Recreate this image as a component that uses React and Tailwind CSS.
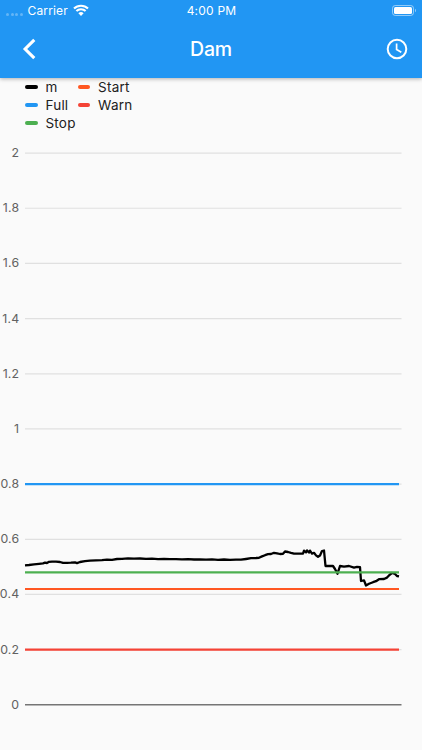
import React from 'react';

const legend = [
  [
    { label: 'm', color: 'bg-black' },
    { label: 'Full', color: 'bg-[#2196f3]' },
    { label: 'Stop', color: 'bg-[#4caf50]' },
  ],
  [
    { label: 'Start', color: 'bg-[#ff5722]' },
    { label: 'Warn', color: 'bg-[#f44336]' },
  ],
];

const ticks = ['2', '1.8', '1.6', '1.4', '1.2', '1', '0.8', '0.6', '0.4', '0.2', '0'];

const limits = [
  { name: 'Full', value: 0.8, color: '#2196f3' },
  { name: 'Stop', value: 0.48, color: '#4caf50' },
  { name: 'Start', value: 0.42, color: '#ff5722' },
  { name: 'Warn', value: 0.2, color: '#f44336' },
];

const level =
  '25,565.3 29,565 34,564.4 39,563.8 43,563.3 45,562.6 47,563 49,561.8 52,561.6 56,561.7 60,562 63,562.8 67,562.9 71,562.7 75,562.4 77,563.1 80,562 85,561.2 90,560.6 96,560.3 102,560.2 107,559.7 112,559.8 117,559 122,558.9 128,558.4 134,558.6 140,558.5 146,558.9 152,558.7 158,559.1 164,558.9 170,559.2 176,559.1 182,559.3 188,559.2 194,559.5 200,559.3 206,559.7 212,559.4 218,559.8 224,559.5 230,559.8 236,559.6 241,559.7 246,559 251,558.2 256,558 259,557.8 262,556.4 265,555.2 268,554.2 271,554 274,552.8 277,553.3 280,554 283,553.8 285,551.5 288,552 291,552.9 294,553.6 297,553.7 300,553.7 303,553.6 304,550.7 306,552.4 307,550.4 309,552.6 310,550.6 312,553.6 314,552.8 316,555.4 318,556.8 320,555.5 322,551 324,550.5 325.5,566 333,566 335,569 337.5,573.7 340,566 344,566.6 349,566 354,567.6 357,566.9 360,567.2 361,581 364,580.3 366,585.5 369,583.8 373,582.2 376,581.2 379,579.2 384,579 387,577.6 389,575.4 392,573 395,574 397,576 399,576.4';

const toY = (value) => 704.8 - value * 275.85;

const StatusBar = () => (
  <div className="flex h-5 items-center justify-between pl-[6px] pr-[5px] text-[12px] leading-5">
    <div className="flex w-[120px] items-center">
      <div className="flex gap-[1.5px] pt-[8px]">
        {[0, 1, 2, 3].map((i) => (
          <span key={i} className="h-[3px] w-[3px] rounded-full bg-white/30" />
        ))}
      </div>
      <span className="ml-[5px] pt-px tracking-[0.15px]">Carrier</span>
      <svg className="ml-[5px] h-[12px] w-[16px]" viewBox="0 0 16 12">
        <g fill="none" stroke="white" strokeWidth="2.1">
          <path d="M1 4.6a9.9 9.9 0 0 1 14 0" />
          <path d="M3.4 7.1a6.5 6.5 0 0 1 9.2 0" />
        </g>
        <path d="M8 11.9 5.4 9.2a3.7 3.7 0 0 1 5.2 0Z" fill="white" />
      </svg>
    </div>
    <span className="pt-px tracking-[0.2px]">4:00 PM</span>
    <div className="flex w-[120px] justify-end">
      <svg className="h-[11px] w-[25px]" viewBox="0 0 25 11">
        <rect x="0.5" y="0.5" width="21" height="10" rx="2.8" fill="none" stroke="white" strokeOpacity="0.5" />
        <rect x="2" y="2" width="18" height="7" rx="1.5" fill="white" />
        <path d="M23 3.8c1.4.5 1.4 2.9 0 3.4Z" fill="white" fillOpacity="0.5" />
      </svg>
    </div>
  </div>
);

const App = () => {
  return (
    <div className="flex h-[750px] w-[422px] flex-col overflow-hidden bg-[#fafafa] font-['Inter','Roboto',sans-serif]">
      <header className="z-10 h-[77.5px] shrink-0 bg-[#2196f3] text-white shadow-[0_1px_4px_rgba(0,0,0,0.3)]">
        <StatusBar />
        <div className="flex h-[58px] items-center justify-between pl-[22px] pr-[14px]">
          <div className="w-12">
            <svg className="h-[22px] w-[14px]" viewBox="0 0 14 22" fill="none" stroke="white" strokeWidth="3.1">
              <path d="M12.3 1.8 3.1 11l9.2 9.2" />
            </svg>
          </div>
          <h1 className="pt-[2px] text-[19.5px] font-medium tracking-[-0.2px]">Dam</h1>
          <div className="flex w-14 justify-end">
            <svg className="h-[22px] w-[22px]" viewBox="0 0 22 22" fill="none" stroke="white" strokeWidth="2">
              <circle cx="11" cy="11" r="9.3" />
              <path d="M10.6 5.6v5.8l4.7 2.8" strokeWidth="1.7" />
            </svg>
          </div>
        </div>
      </header>

      <div className="flex h-[54.5px] shrink-0 pl-[25px] text-[13.5px] leading-[18.3px] text-[#212121]">
        {legend.map((column, i) => (
          <div key={i} className="mr-[2px]">
            {column.map((item) => (
              <div key={item.label} className="flex items-center">
                <span className={`mr-[8px] h-[4px] w-[12.5px] rounded-full ${item.color}`} />
                <span className="tracking-[0.2px]">{item.label}</span>
              </div>
            ))}
          </div>
        ))}
      </div>

      {/* Water level chart */}
      <svg className="h-[618px] w-[422px] shrink-0" viewBox="0 132 422 618">
        {ticks.map((tick) => {
          const y = toY(Number(tick));
          return (
            <g key={tick}>
              <text x="19.3" y={y + 4} textAnchor="end" fontSize="12.3" letterSpacing="0.2" fill="#616161">
                {tick}
              </text>
              <line
                x1="25"
                x2="401.5"
                y1={y}
                y2={y}
                stroke={tick === '0' ? '#757575' : '#e0e0e0'}
                strokeWidth={tick === '0' ? 1.4 : 1.2}
              />
            </g>
          );
        })}
        <polyline points={level} fill="none" stroke="black" strokeWidth="2.3" strokeLinejoin="round" />
        {limits.map((limit) => (
          <line
            key={limit.name}
            x1="25"
            x2="399"
            y1={toY(limit.value)}
            y2={toY(limit.value)}
            stroke={limit.color}
            strokeWidth="2.1"
          />
        ))}
      </svg>
    </div>
  );
};

export default App;
